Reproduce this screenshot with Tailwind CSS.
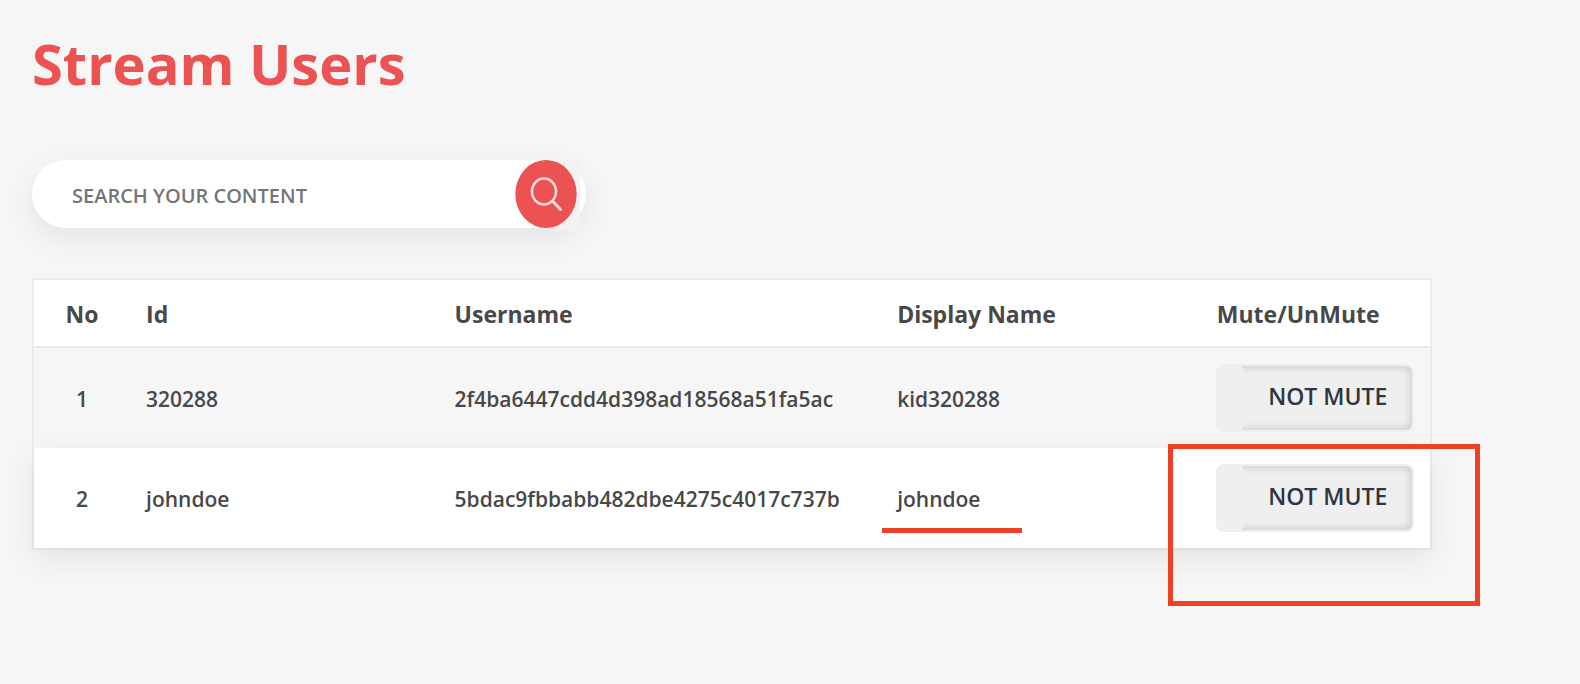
<!DOCTYPE html>
<html lang="en">
<head>
<meta charset="utf-8">
<meta name="viewport" content="width=device-width, initial-scale=1">
<title>Stream Users</title>
<script src="https://cdn.jsdelivr.net/npm/@tailwindcss/browser@4"></script>
</head>
<body class="min-h-screen bg-[#f6f6f6] font-['Open_Sans','Noto_Sans',sans-serif] text-[#484848]">
<main class="pt-[26px] pr-[148px] pb-8 pl-8">
  <h1 class="text-[56px] leading-[74px] font-bold text-[#ec5252]">Stream Users</h1>

  <form class="mt-[60px] flex h-[68px] w-full max-w-[554px] items-center rounded-full bg-white pr-1.5 shadow-[0_10px_30px_rgba(0,0,0,0.08)]">
    <input type="search" aria-label="Search your content" placeholder="SEARCH YOUR CONTENT" class="h-full min-w-0 flex-1 bg-transparent pt-0.5 pl-10 text-[20px] font-semibold outline-none placeholder:text-[#757575]">
    <button type="button" aria-label="Search" class="h-[68px] w-[65px]">
      <svg viewBox="0 0 65 68" class="h-full w-full overflow-visible" fill="none">
        <path d="M40 0h25v71H40z" fill="#f2f2f2"/>
        <ellipse cx="31" cy="34" rx="30.700" ry="34" fill="#ec5252"/>
        <ellipse cx="29" cy="31.500" rx="12" ry="13" stroke="#fbdcdc" stroke-width="2.500"/>
        <path d="M37.500 41l8 8.500" stroke="#fbdcdc" stroke-width="3" stroke-linecap="round"/>
      </svg>
    </button>
  </form>

  <table class="mt-[50px] w-full table-fixed border-separate border-spacing-0 border-2 border-[#ebebeb] text-left">
    <colgroup>
      <col class="w-[96px]"><col class="w-[22.1%]"><col class="w-[31.7%]"><col class="w-[22.9%]"><col class="w-[229px]">
    </colgroup>
    <thead>
      <tr class="h-[68px] bg-white text-[23px] font-bold">
        <th scope="col" class="border-b-2 border-[#ebebeb] px-4 pt-0.5 text-center">No</th>
        <th scope="col" class="border-b-2 border-[#ebebeb] px-4 pt-0.5">Id</th>
        <th scope="col" class="border-b-2 border-[#ebebeb] px-4 pt-0.5">Username</th>
        <th scope="col" class="border-b-2 border-[#ebebeb] px-4 pt-0.5">Display Name</th>
        <th scope="col" class="border-b-2 border-[#ebebeb] px-4 pt-0.5">Mute/UnMute</th>
      </tr>
    </thead>
    <tbody class="text-[21px] font-semibold">
      <tr class="h-[100px]">
        <td class="px-4 pt-1 text-center">1</td>
        <td class="px-4 pt-1">320288</td>
        <td class="px-4 pt-1">2f4ba6447cdd4d398ad18568a51fa5ac</td>
        <td class="px-4 pt-1">kid320288</td>
        <td class="pl-[15px]">
          <button type="button" class="flex h-[68px] w-[198px] items-stretch rounded-lg border-2 border-[#efefef] bg-[#efefef] text-[23px] text-[#2f3542] shadow-[inset_0_0_10px_rgba(0,0,0,0.2)]">
            <span class="-my-0.5 -ml-0.5 w-7 rounded-lg bg-[#efefef]"></span>
            <span class="flex-1 self-center pb-1 text-center">NOT MUTE</span>
          </button>
        </td>
      </tr>
      <tr class="h-[100px] bg-white shadow-[0_10px_30px_rgba(0,0,0,0.08)]">
        <td class="px-4 pt-1 text-center">2</td>
        <td class="px-4 pt-1">johndoe</td>
        <td class="px-4 pt-1">5bdac9fbbabb482dbe4275c4017c737b</td>
        <td class="relative px-4 pt-1">johndoe
          <span class="absolute top-20 left-px h-[5px] w-[140px] bg-[#ee4023]"></span>
        </td>
        <td class="relative pl-[15px]">
          <button type="button" class="flex h-[68px] w-[198px] items-stretch rounded-lg border-2 border-[#efefef] bg-[#efefef] text-[23px] text-[#2f3542] shadow-[inset_0_0_10px_rgba(0,0,0,0.2)]">
            <span class="-my-0.5 -ml-0.5 w-7 rounded-lg bg-[#efefef]"></span>
            <span class="flex-1 self-center pb-1 text-center">NOT MUTE</span>
          </button>
          <span class="pointer-events-none absolute -top-1 -left-[33px] h-[162px] w-[312px] border-5 border-[#ee4023]"></span>
        </td>
      </tr>
    </tbody>
  </table>
</main>
</body>
</html>
